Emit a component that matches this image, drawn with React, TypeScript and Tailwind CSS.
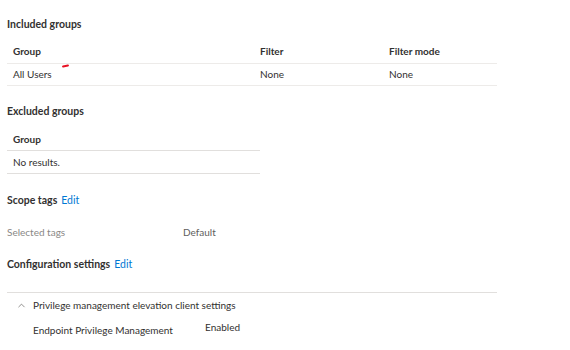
import { ChevronUp } from 'lucide-react'

const font = { fontFamily: 'Lato, "Noto Sans", sans-serif' }

function Heading({ title, edit }: { title: string; edit?: boolean }) {
  return (
    <div className="flex items-center gap-[4px] h-[16px]">
      <span className="text-[10.5px] font-bold text-[#323130]">{title}</span>
      {edit && <span className="text-[10.5px] text-[#0078d4]">Edit</span>}
    </div>
  )
}

export default function App() {
  return (
    <div className="w-[570px] h-[350px] bg-white text-[#323130] relative" style={font}>
      <div className="pl-[7px] pt-[17px] w-[497px]">
        <Heading title="Included groups" />

        {/* Included groups table */}
        <div className="mt-[7px] w-[490px]">
          <div className="grid grid-cols-[253px_129px_1fr] h-[24px] items-center border-b border-[#edebe9] text-[10px] font-bold">
            <span className="pl-[6px]">Group</span>
            <span>Filter</span>
            <span>Filter mode</span>
          </div>
          <div className="grid grid-cols-[253px_129px_1fr] h-[22px] items-center border-b border-[#edebe9] text-[10px]">
            <span className="pl-[6px]">All Users</span>
            <span>None</span>
            <span>None</span>
          </div>
        </div>

        <div className="mt-[18px]">
          <Heading title="Excluded groups" />
        </div>

        {/* Excluded groups table */}
        <div className="mt-[8px] w-[253px]">
          <div className="h-[23px] flex items-center border-b border-[#e1dfdd] text-[10px] font-bold pl-[6px]">
            Group
          </div>
          <div className="h-[23px] flex items-center border-b border-[#e1dfdd] text-[10px] pl-[6px]">
            No results.
          </div>
        </div>

        <div className="mt-[19px]">
          <Heading title="Scope tags" edit />
        </div>

        <div className="mt-[15px] flex items-center h-[16px] text-[10px]">
          <span className="w-[176px] text-[#8a8886]">Selected tags</span>
          <span className="text-[#605e5c]">Default</span>
        </div>

        <div className="mt-[17px]">
          <Heading title="Configuration settings" edit />
        </div>

        <div className="mt-[19px] w-[490px] border-t border-[#e1dfdd]">
          <div className="flex items-center h-[24px] text-[10px]">
            <ChevronUp className="w-[11px] h-[11px] ml-[9px] mr-[6px] text-[#605e5c]" strokeWidth={1.5} />
            <span>Privilege management elevation client settings</span>
          </div>
          <div className="flex items-start h-[24px] mt-[3px] pl-[26px] text-[10px]">
            <span className="w-[172px] mt-[3px]">Endpoint Privilege Management</span>
            <span>Enabled</span>
          </div>
        </div>
      </div>

      {/* red annotation mark */}
      <div className="absolute left-[62px] top-[65px] w-[7px] h-[2px] bg-[#e81123] rounded-full -rotate-12" />
    </div>
  )
}
